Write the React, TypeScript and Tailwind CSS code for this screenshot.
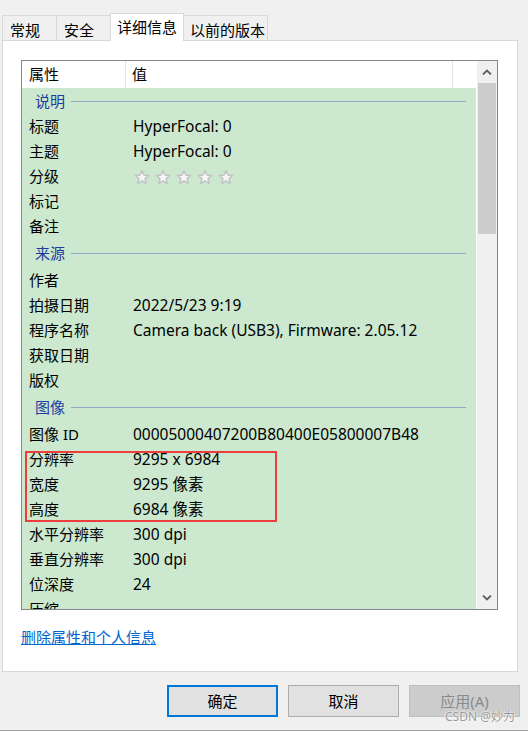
type Row = { k: string; v?: string; section?: boolean; stars?: boolean };

const rows: Row[] = [
  { k: "说明", section: true },
  { k: "标题", v: "HyperFocal: 0" },
  { k: "主题", v: "HyperFocal: 0" },
  { k: "分级", stars: true },
  { k: "标记" },
  { k: "备注" },
  { k: "来源", section: true },
  { k: "作者" },
  { k: "拍摄日期", v: "2022/5/23 9:19" },
  { k: "程序名称", v: "Camera back (USB3), Firmware: 2.05.12" },
  { k: "获取日期" },
  { k: "版权" },
  { k: "图像", section: true },
  { k: "图像 ID", v: "00005000407200B80400E05800007B48" },
  { k: "分辨率", v: "9295 x 6984" },
  { k: "宽度", v: "9295 像素" },
  { k: "高度", v: "6984 像素" },
  { k: "水平分辨率", v: "300 dpi" },
  { k: "垂直分辨率", v: "300 dpi" },
  { k: "位深度", v: "24" },
  { k: "压缩" },
];

const font = { fontFamily: "'Noto Sans', 'Noto Sans CJK SC', sans-serif" };

function Star() {
  return (
    <svg width="16" height="16" viewBox="0 0 24 24">
      <path
        d="M12 2.5l2.9 6.6 7.1.6-5.4 4.7 1.6 7-6.2-3.7-6.2 3.7 1.6-7L2 9.7l7.1-.6z"
        fill="#f6f6f6"
        stroke="#c2c2c2"
        strokeWidth="2.2"
        strokeLinejoin="round"
      />
    </svg>
  );
}

function Tab({ label, w, active }: { label: string; w: string; active?: boolean }) {
  if (active) {
    return (
      <div className={`${w} h-[28px] -mb-px bg-white border border-[#d9d9d9] border-b-0 pl-[6px] pt-[2px] text-[15px] leading-[22px] relative z-10`}>
        {label}
      </div>
    );
  }
  return (
    <div className={`${w} h-[25px] bg-[#f0f0f0] border border-[#d9d9d9] border-b-0 border-r-0 pl-[7px] pt-[3px] text-[15px] leading-[22px]`}>
      {label}
    </div>
  );
}

export default function App() {
  return (
    <div className="w-[528px] h-[731px] bg-[#f0f0f0] text-black border-b border-[#a0a0a0] relative overflow-hidden" style={font}>
      <div className="flex items-end pt-[13px] pl-[2px]">
        <Tab label="常规" w="w-[54px]" />
        <Tab label="安全" w="w-[54px]" />
        <Tab label="详细信息" w="w-[74px]" active />
        <div className="w-[84px] h-[25px] bg-[#f0f0f0] border border-[#d9d9d9] border-b-0 border-l-0 pl-[6px] pt-[3px] text-[15px] leading-[22px]">
          以前的版本
        </div>
      </div>

      <div className="ml-[2px] w-[516px] h-[632px] bg-white border border-[#d9d9d9] pl-[18px] pt-[19px]">
        <div className="relative w-[477px] h-[550px] border border-[#828790] flex">
          <div className="flex-1 overflow-hidden">
            <div className="flex h-[27px] bg-white text-[15px] leading-[27px]">
              <div className="w-[104px] pl-[7px] border-r border-[#e5e5e5]">属性</div>
              <div className="w-[327px] pl-[6px] border-r border-[#e5e5e5]">值</div>
            </div>
            <div className="bg-[#cce8cf] h-[600px] border-r border-white">
              {rows.map((r, i) =>
                r.section ? (
                  <div key={i} className={`flex items-center ${i === 0 ? "h-[26px]" : "h-[29px]"} pl-[13px] pr-[10px]`}>
                    <span className="text-[15px] text-[#1d3c9e]">{r.k}</span>
                    <div className="flex-1 h-px bg-[#8eaac6] ml-[6px]" />
                  </div>
                ) : (
                  <div key={i} className="flex items-center h-[25px] text-[15px]">
                    <div className="w-[111px] pl-[7px] whitespace-nowrap">{r.k}</div>
                    <div className="whitespace-nowrap text-[15.5px]">
                      {r.stars ? (
                        <div className="flex gap-[5px] pl-[1px]">
                          <Star />
                          <Star />
                          <Star />
                          <Star />
                          <Star />
                        </div>
                      ) : (
                        r.v
                      )}
                    </div>
                  </div>
                )
              )}
            </div>
          </div>
          <div className="w-[20px] bg-[#f0f0f0] flex flex-col">
            <div className="h-[22px] flex items-center justify-center">
              <svg width="10" height="6" viewBox="0 0 10 6">
                <path d="M1 5.5L5 1.5L9 5.5" fill="none" stroke="#606060" strokeWidth="1.8" />
              </svg>
            </div>
            <div className="mx-[1px] h-[151px] bg-[#cdcdcd]" />
            <div className="flex-1" />
            <div className="h-[22px] flex items-center justify-center">
              <svg width="10" height="6" viewBox="0 0 10 6">
                <path d="M1 0.5L5 4.5L9 0.5" fill="none" stroke="#606060" strokeWidth="1.8" />
              </svg>
            </div>
          </div>

          <div className="absolute left-[3px] top-[390px] w-[252px] h-[71px] border-2 border-[#ee3d3d]" />
        </div>

        <div className="mt-[17px] text-[15px] leading-[20px]">
          <a href="#" className="text-[#0066cc] underline">删除属性和个人信息</a>
        </div>
      </div>

      <div className="flex justify-end gap-[10px] pr-[8px] mt-[13px]">
        <button className="w-[111px] h-[32px] bg-[#e1e1e1] border-2 border-[#0078d7] text-[15px]">确定</button>
        <button className="w-[111px] h-[32px] bg-[#e1e1e1] border border-[#adadad] text-[15px]">取消</button>
        <button className="w-[111px] h-[32px] bg-[#cccccc] border border-[#bfbfbf] text-[15px] text-[#8a8a8a]">应用(A)</button>
      </div>

      <div
        className="absolute left-[445px] top-[708px] text-[12px] text-[#9a9a9a]"
        style={{ textShadow: "0 0 2px #fff, 0 0 2px #fff" }}
      >
        CSDN @妙为
      </div>
    </div>
  );
}
